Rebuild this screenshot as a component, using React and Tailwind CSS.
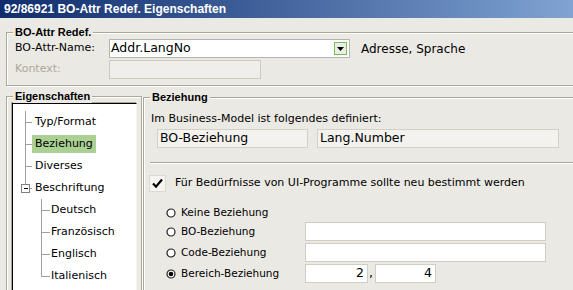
import React from 'react'

const sans = "font-['DejaVu_Sans',sans-serif]"
const bold = "font-['Liberation_Sans',Arial,sans-serif] font-bold"

const tree = [
  { label: 'Typ/Format', level: 1, kind: 'mid' },
  { label: 'Beziehung', level: 1, kind: 'mid', selected: true },
  { label: 'Diverses', level: 1, kind: 'mid' },
  { label: 'Beschriftung', level: 1, kind: 'minus' },
  { label: 'Deutsch', level: 2, kind: 'mid' },
  { label: 'Französisch', level: 2, kind: 'mid' },
  { label: 'Englisch', level: 2, kind: 'mid' },
  { label: 'Italienisch', level: 2, kind: 'last' },
]

function Group({ label, className = '', children }) {
  return (
    <div className={`relative shrink-0 border border-[#aca899] shadow-[inset_1px_1px_0_#fff,1px_1px_0_#fff] ${className}`}>
      <span className={`absolute -top-[8px] left-[6px] px-[2px] bg-[#ebe9e4] text-[11px] leading-[14px] text-black ${bold}`}>
        {label}
      </span>
      {children}
    </div>
  )
}

// tree connector lines
function Connector({ level, kind }) {
  const line = '#a0a0a0'
  if (level === 1) {
    return (
      <svg width="19" height="22" className="shrink-0" shapeRendering="crispEdges">
        {kind === 'mid' && (
          <>
            <line x1="12.5" y1="0" x2="12.5" y2="22" stroke={line} />
            <line x1="12.5" y1="11.5" x2="19" y2="11.5" stroke={line} />
          </>
        )}
        {kind === 'minus' && (
          <>
            <line x1="12.5" y1="0" x2="12.5" y2="7.5" stroke={line} />
            <rect x="8.5" y="7.5" width="8" height="8" fill="#fff" stroke="#808080" />
            <line x1="10.5" y1="11.5" x2="15" y2="11.5" stroke="#000" />
            <line x1="16.5" y1="11.5" x2="19" y2="11.5" stroke={line} />
          </>
        )}
      </svg>
    )
  }
  return (
    <>
      <div className="w-[19px] shrink-0" />
      <svg width="18" height="22" className="shrink-0" shapeRendering="crispEdges">
        <line x1="9.5" y1="0" x2="9.5" y2={kind === 'last' ? 11.5 : 22} stroke={line} />
        <line x1="9.5" y1="11.5" x2="18" y2="11.5" stroke={line} />
      </svg>
    </>
  )
}

function Radio({ checked }) {
  return (
    <svg width="10" height="10" className="shrink-0">
      <circle cx="5" cy="5" r="4" fill="#fff" stroke="#222" strokeWidth="1.2" />
      {checked && <circle cx="5" cy="5" r="2.3" fill="#000" />}
    </svg>
  )
}

function Field({ className = '', children, align = 'justify-start' }) {
  return (
    <div className={`shrink-0 h-[19px] bg-white border border-[#d0cdc4] flex items-center px-[2px] text-[12.5px] text-black ${align} ${className}`}>
      {children}
    </div>
  )
}

export default function App() {
  return (
    <div className={`w-[573px] h-[290px] overflow-hidden bg-[#ebe9e4] text-black ${sans}`}>
      {/* title bar */}
      <div className={`h-[18px] flex items-center pl-[4px] bg-linear-to-r from-[#102c6c] to-[#80a3d3] text-white text-[12px] ${bold}`}>
        92/86921 BO-Attr Redef. Eigenschaften
      </div>

      <div className="pl-[6px]">
        {/* BO-Attr Redef. */}
        <Group label="BO-Attr Redef." className="mt-[14px] w-[600px] h-[54px]">
          <div className="pt-[6px] pl-[8px] flex flex-col gap-[2px]">
            <div className="flex items-center h-[19px]">
              <span className="w-[94px] shrink-0 text-[11px]">BO-Attr-Name:</span>
              <div className="w-[241px] shrink-0 h-[19px] bg-white border border-[#b4b4b4] flex items-center justify-between pl-[1px] pr-[2px]">
                <span className="text-[12.5px]">Addr.LangNo</span>
                <div className="w-[13px] h-[13px] border border-[#76bf55] bg-[#eceee6] flex items-center justify-center">
                  <svg width="7" height="4"><path d="M0 0h7L3.5 4z" fill="#000" /></svg>
                </div>
              </div>
              <span className="ml-[11px] text-[12px]">Adresse, Sprache</span>
            </div>
            <div className="flex items-center h-[19px]">
              <span className="w-[94px] shrink-0 text-[11px] text-[#aca899]">Kontext:</span>
              <div className="w-[152px] h-[19px] bg-[#efeeea] border border-[#ccc9c1]" />
            </div>
          </div>
        </Group>

        <div className="mt-[10px] flex items-start">
          {/* Eigenschaften */}
          <Group label="Eigenschaften" className="w-[136px] h-[220px]">
            <div className="mt-[6px] ml-[5px] w-[125px] h-[220px] bg-white border-t border-l border-r border-black border-r-[#f5f4f0] shadow-[-1px_-1px_0_#aca899] pt-[7px]">
              {tree.map((t) => (
                <div key={t.label} className="flex items-center h-[22px]">
                  <Connector level={t.level} kind={t.kind} />
                  <span
                    className={`text-[11px] leading-[18px] h-[18px] ${
                      t.level === 1 ? 'px-[3px]' : 'pl-[1px]'
                    } ${t.selected ? 'bg-[#abd093]' : ''}`}
                  >
                    {t.label}
                  </span>
                </div>
              ))}
            </div>
          </Group>

          {/* Beziehung */}
          <Group label="Beziehung" className="ml-[1px] mt-[1px] w-[450px] h-[220px]">
            <div className="pl-[7px] flex flex-col">
              <p className="mt-[14px] h-[14px] leading-[14px] text-[11px]">Im Business-Model ist folgendes definiert:</p>
              <div className="mt-[3px] ml-[6px] flex gap-[9px]">
                <div className="w-[151px] shrink-0 h-[19px] bg-[#f3f2ee] border border-[#d3d0c7] flex items-center px-[2px] text-[12.5px]">BO-Beziehung</div>
                <div className="w-[242px] shrink-0 h-[19px] bg-[#f3f2ee] border border-[#d3d0c7] flex items-center px-[2px] text-[12.5px]">Lang.Number</div>
              </div>
              <div className="mt-[14px] -ml-[1px] h-[2px] border-t border-[#aca899] border-b border-b-white" />

              <div className="mt-[11px] -ml-[2px] flex items-center h-[17px]">
                <div className="w-[17px] h-[17px] shrink-0 bg-[#f5f4f0] border border-[#dcd9d0] flex items-center justify-center">
                  <svg width="13" height="13" viewBox="0 0 13 13">
                    <path d="M2 6.5l3 3.2L11 2.5" fill="none" stroke="#000" strokeWidth="2.2" />
                  </svg>
                </div>
                <span className="ml-[9px] text-[11px] whitespace-nowrap">Für Bedürfnisse von UI-Programme sollte neu bestimmt werden</span>
              </div>

              <div className="mt-[11px] ml-[15px] flex flex-col text-[10.5px]">
                <div className="h-[19px] flex items-center">
                  <Radio />
                  <span className="ml-[5px]">Keine Beziehung</span>
                </div>
                <div className="h-[19px] flex items-center">
                  <div className="w-[139px] shrink-0 flex items-center">
                    <Radio />
                    <span className="ml-[5px]">BO-Beziehung</span>
                  </div>
                  <Field className="w-[241px]" />
                </div>
                <div className="mt-[2px] h-[19px] flex items-center">
                  <div className="w-[139px] shrink-0 flex items-center">
                    <Radio />
                    <span className="ml-[5px]">Code-Beziehung</span>
                  </div>
                  <Field className="w-[241px]" />
                </div>
                <div className="mt-[2px] h-[19px] flex items-center">
                  <div className="w-[139px] shrink-0 flex items-center">
                    <Radio checked />
                    <span className="ml-[5px]">Bereich-Beziehung</span>
                  </div>
                  <Field className="w-[63px] pr-[3px]" align="justify-end">2</Field>
                  <span className="w-[7px] shrink-0 text-[12.5px] pl-[1px]">,</span>
                  <Field className="w-[61px] pr-[3px]" align="justify-end">4</Field>
                </div>
              </div>
            </div>
          </Group>
        </div>
      </div>
    </div>
  )
}
